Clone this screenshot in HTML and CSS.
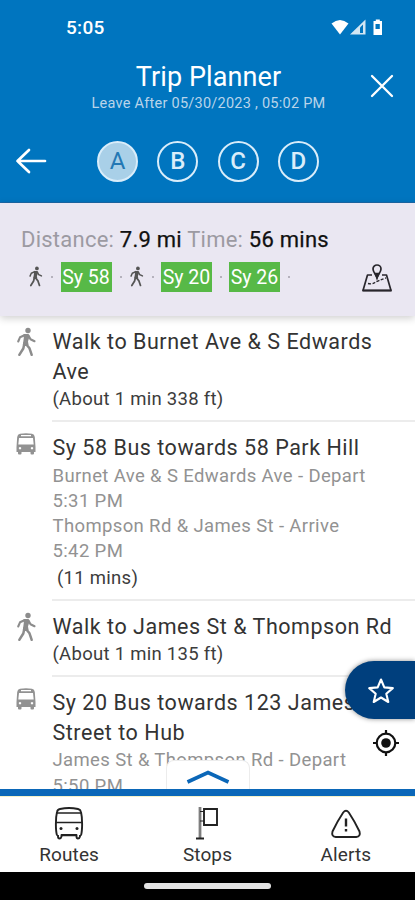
FILE: index.html
```html
<!DOCTYPE html>
<html lang="en">
<head>
<meta charset="utf-8">
<title>Trip Planner</title>
<link rel="stylesheet" href="styles.css">
</head>
<body>
<svg class="defs" aria-hidden="true">
  <symbol id="walk" viewBox="0 0 20 30">
    <circle cx="12" cy="3.500" r="2.700"/>
    <path d="M8.500 16 7.300 21.500 3.300 27.800M9.500 16.500l4 4.800L15.700 27.800" fill="none" stroke="currentColor" stroke-width="2.500" stroke-linejoin="round" stroke-linecap="round"/>
    <path d="M7.500 7h5l1 2.500-1.500 5 .6 3.500H6.800l1-7z"/>
    <path d="M9 8 4 10.300 2.200 14.500M12.500 8.500l2 3.700 4 2" fill="none" stroke="currentColor" stroke-width="2.100" stroke-linecap="round" stroke-linejoin="round"/>
  </symbol>
  <symbol id="bus" viewBox="0 0 20 22">
    <path fill-rule="evenodd" d="M4 .8Q10-.5 16 .8q2.500.5 2.800 3.200L19.500 14v5H18v1.500a1 1 0 0 1-1 1h-1.500a1 1 0 0 1-1-1V19h-9v1.500a1 1 0 0 1-1 1H3a1 1 0 0 1-1-1V19H.5v-5L1.200 4Q1.500 1.300 4 .8zM5 2v1.300h10V2zM3 5 2.300 11.500h15.400L17 5zM4 14a1.200 1.200 0 1 0 .01 0zM16 14a1.200 1.200 0 1 0 .01 0z"/>
  </symbol>
</svg>
<div class="phone">
  <header class="header">
    <div class="status">
      <span>5:05</span>
      <svg width="54" height="18" viewBox="0 0 54 18">
        <path d="M.5 4.500Q9-2.500 17.500 4.500L9 15.500z" fill="#fff"/>
        <path d="M19 15.500 34.500.5v15z" fill="#d2e6f3"/>
        <path d="M29 14V8.500l3-3V14z" fill="#0075bf"/>
        <path d="M42.500 2h2.300V.5h4V2H51v14h-8.500z" fill="#fff"/>
        <path d="M44.500 5h4.300v5h-4.300z" fill="#0075bf"/>
      </svg>
    </div>
    <div class="heading">
      <div class="titles">
        <h1>Trip Planner</h1>
        <p>Leave After 05/30/2023 , 05:02 PM</p>
      </div>
      <svg class="close" width="24" height="24" viewBox="0 0 24 24"><path d="M2 2l20 20M22 2 2 22" stroke="#fff" stroke-width="2.300" stroke-linecap="round"/></svg>
    </div>
    <div class="options">
      <svg class="back" width="32" height="28" viewBox="0 0 32 28"><path d="M30 14H2.500M14 3 2.500 14 14 25" fill="none" stroke="#fff" stroke-width="2.700" stroke-linecap="round" stroke-linejoin="round"/></svg>
      <span class="option selected">A</span>
      <span class="option">B</span>
      <span class="option">C</span>
      <span class="option">D</span>
    </div>
  </header>

  <section class="summary">
    <p class="totals"><span>Distance:</span> <b>7.9 mi</b> <span>Time:</span> <b>56 mins</b></p>
    <div class="legs">
      <svg class="leg-walk"><use href="#walk"/></svg><i></i>
      <span class="route">Sy 58</span><i></i>
      <svg class="leg-walk"><use href="#walk"/></svg><i></i>
      <span class="route">Sy 20</span><i></i>
      <span class="route">Sy 26</span><i></i>
      <svg class="map" width="32" height="30" viewBox="0 0 32 30" fill="none" stroke="#28262c" stroke-width="1.700">
        <path d="M11 12H6.500L2 27.500h28L25.500 12H21" stroke-linejoin="round"/>
        <path d="M1.500 27.500h29" stroke-width="2"/>
        <path d="M16 14.500C14.500 11 12 9 12 6a4 4 0 0 1 8 0c0 3-2.500 5-4 8.500z"/>
        <path d="M14.500 10.500h3L16 15z" fill="#28262c"/>
        <path d="M7 20.500q4 1 7-1t11-4.500" stroke-dasharray="3 1.600" stroke-width="1.400"/>
      </svg>
    </div>
  </section>

  <main class="steps">
    <article class="step">
      <svg class="step-walk"><use href="#walk"/></svg>
      <div class="body">
        <h2>Walk to Burnet Ave &amp; S Edwards Ave</h2>
        <p class="note">(About 1 min 338 ft)</p>
      </div>
    </article>
    <article class="step">
      <svg class="step-bus"><use href="#bus"/></svg>
      <div class="body">
        <h2>Sy 58 Bus towards 58 Park Hill</h2>
        <p>Burnet Ave &amp; S Edwards Ave - Depart<br>5:31 PM</p>
        <p>Thompson Rd &amp; James St - Arrive<br>5:42 PM</p>
        <p class="note indent">(11 mins)</p>
      </div>
    </article>
    <article class="step">
      <svg class="step-walk"><use href="#walk"/></svg>
      <div class="body">
        <h2>Walk to James St &amp; Thompson Rd</h2>
        <p class="note">(About 1 min 135 ft)</p>
      </div>
    </article>
    <article class="step">
      <svg class="step-bus"><use href="#bus"/></svg>
      <div class="body">
        <h2>Sy 20 Bus towards 123 James<br>Street to Hub</h2>
        <p>James St &amp; Thompson Rd - Depart<br>5:50 PM</p>
      </div>
    </article>
    <div class="favorite">
      <svg width="28" height="28" viewBox="0 0 28 28"><path d="M14 2.500l3.300 7.900 8.500.7-6.500 5.600 2 8.300-7.300-4.500L6.700 25l2-8.300-6.500-5.600 8.500-.7z" fill="none" stroke="#fff" stroke-width="2.100" stroke-linejoin="round"/></svg>
    </div>
    <svg class="locate" width="28" height="28" viewBox="0 0 28 28"><circle cx="14" cy="14" r="9.300" fill="none" stroke="#111" stroke-width="2.200"/><circle cx="14" cy="14" r="4.800" fill="#111"/><path d="M14 1v4M14 23v4M1 14h4M23 14h4" stroke="#111" stroke-width="2.200"/></svg>
    <div class="expand">
      <svg width="44" height="16" viewBox="0 0 44 16"><path d="M1.500 13 22 3.500 42.500 13" fill="none" stroke="#0b67b8" stroke-width="3.600"/></svg>
    </div>
  </main>

  <nav class="tabs">
    <div class="tab">
      <svg width="30" height="34" viewBox="0 0 30 34" fill="none" stroke="#222" stroke-width="1.900">
        <path d="M3 29.500C1.500 24 1.500 12 3 6Q3.500 3.500 6 3 15 1 24 3q2.500.5 3 3c1.500 6 1.500 18 0 23.500M4 29v1.500q0 2 1.500 2T7.500 30.500V29h15v1.500q0 2 1.500 2t2-2V29" stroke-linejoin="round"/>
        <path d="M3 7h24M2 16.500h26M7 29.500h16" stroke-width="1.300"/>
        <circle cx="7" cy="22.500" r="1.500" fill="#222" stroke="none"/><circle cx="23" cy="22.500" r="1.500" fill="#222" stroke="none"/>
      </svg>
      <span>Routes</span>
    </div>
    <div class="tab">
      <svg width="30" height="34" viewBox="0 0 30 34" fill="none" stroke="#222">
        <path d="M8 1v31" stroke="#555" stroke-width="2.600"/><path d="M8 1v31" stroke="#ccc" stroke-width=".7"/><path d="M4 32.500h8" stroke-width="2"/>
        <path d="M8 5.500h4M8 15h4" stroke-width="1.200"/>
        <path d="M12 3h13v16H12z" stroke-width="1.900"/>
      </svg>
      <span>Stops</span>
    </div>
    <div class="tab">
      <svg width="32" height="34" viewBox="0 0 32 34" fill="none" stroke="#222" stroke-width="1.900">
        <path d="M13.200 6.500q2.800-3.500 5.600 0Q24.500 15 29.500 25.500q1.400 5-3.300 5.500H5.800Q1.100 30.500 2.500 25.500 7.500 15 13.200 6.500z"/>
        <path d="M16 12.500v8M16 23v2.500" stroke-width="2.400"/>
      </svg>
      <span>Alerts</span>
    </div>
  </nav>
  <div class="gesture"><span></span></div>
</div>
</body>
</html>
```

FILE: styles.css
```css
* { box-sizing: border-box; margin: 0; padding: 0; }
body { font-family: Roboto, "Liberation Sans", sans-serif; background: #fff; }
svg { flex: none; display: block; }
.defs { position: absolute; width: 0; height: 0; }
.phone { display: flex; flex-direction: column; width: 415px; height: 900px; overflow: hidden; }

.header { height: 203px; flex: none; background: #0075bf; border-bottom: 1px solid #1b68a8; color: #fff; }
.status { height: 56px; padding: 19px 30px 0 66px; display: flex; justify-content: space-between; font-size: 19px; line-height: 18px; font-weight: 500; letter-spacing: .3px; }
.heading { height: 65px; display: flex; }
.titles { width: 345px; padding: 5px 0 0 72px; text-align: center; white-space: nowrap; }
.titles h1 { font-size: 27px; line-height: 32px; font-weight: 400; letter-spacing: .1px; }
.titles p { font-size: 14.500px; line-height: 18px; margin-top: 2px; color: #b9d4ea; letter-spacing: .25px; }
.close { margin: 18px 0 0 25px; }
.options { display: flex; align-items: center; height: 80px; padding-left: 15px; }
.back { margin-right: 50px; }
.option { width: 41px; height: 41px; margin-right: 19.300px; border: 2px solid #d9edfa; border-radius: 50%; display: flex; align-items: center; justify-content: center; font-size: 24px; font-weight: 500; color: #d9edfa; }
.selected { background: #a9d0e8; color: #2478b4; font-weight: 400; }

.summary { height: 113px; flex: none; background: #eae7f2; padding: 23px 22px 0 21px; box-shadow: 0 2px 8px rgba(0,0,0,.2); position: relative; z-index: 1; }
.totals { font-size: 22px; line-height: 28px; color: #9c9aa2; white-space: nowrap; letter-spacing: .24px; }
.totals b { font-weight: 400; color: #111; -webkit-text-stroke: .25px #111; }
.legs { display: flex; align-items: center; height: 31px; margin-top: 7px; padding-left: 7px; }
.leg-walk { width: 15px; height: 21px; color: #555; fill: #555; }
.legs i { width: 2px; height: 2px; margin: 0 7px 0 8px; background: #b5b2bd; }
.legs .leg-walk + i { margin-right: 7.500px; }
.route { width: 51px; height: 30px; background: #57b947; color: #fff; font-size: 19.500px; line-height: 31px; text-align: center; white-space: nowrap; }
.map { margin: 2px 0 0 auto; }

.steps { height: 473px; flex: none; position: relative; overflow: hidden; }
.step { display: flex; padding-left: 16px; }
.body { width: 363px; margin-left: auto; padding: 11px 15px 8px 0; border-bottom: 2px solid #ececec; font-size: 18.500px; line-height: 25.300px; color: #929292; letter-spacing: .37px; }
.body h2 { font-size: 21.500px; line-height: 29.600px; font-weight: 400; color: #333; letter-spacing: .53px; }
.body h2, .body p { padding-left: .5px; }
.body h2 + p:not(.note) { padding-top: .8px; }
.body .note { color: #3c3c3c; letter-spacing: .28px; line-height: 26px; }
.body .indent { padding-left: 5px; }
.step-walk { width: 20px; height: 30px; margin-top: 11px; color: #8c8c8c; fill: #8c8c8c; }
.step-bus { width: 20px; height: 22px; margin-top: 11px; fill: #929292; }
.favorite { position: absolute; right: 0; top: 345px; width: 70px; height: 58px; border-radius: 29px 0 0 29px; background: #003f7d; box-shadow: 0 0 5px rgba(0,0,0,.45); padding: 16px 0 0 22px; }
.locate { position: absolute; right: 15px; top: 413px; }
.expand { position: absolute; left: 166px; bottom: 0; width: 84px; height: 29px; background: #fff; border: 1px solid #ececec; border-bottom: 0; border-radius: 8px 8px 0 0; padding: 8px 0 0 19px; }

.tabs { height: 83px; flex: none; border-top: 7px solid #0b67b8; display: flex; box-shadow: inset 0 1px #f4f1c8; }
.tab { flex: 1; display: flex; flex-direction: column; align-items: center; padding-top: 10px; font-size: 19px; line-height: 24px; color: #333; letter-spacing: .1px; }
.tab span { margin-top: 3px; }
.gesture { flex: 1; background: #000; display: flex; justify-content: center; padding-top: 11px; }
.gesture span { width: 127px; height: 6px; border-radius: 3px; background: #e4e4e4; }
```
